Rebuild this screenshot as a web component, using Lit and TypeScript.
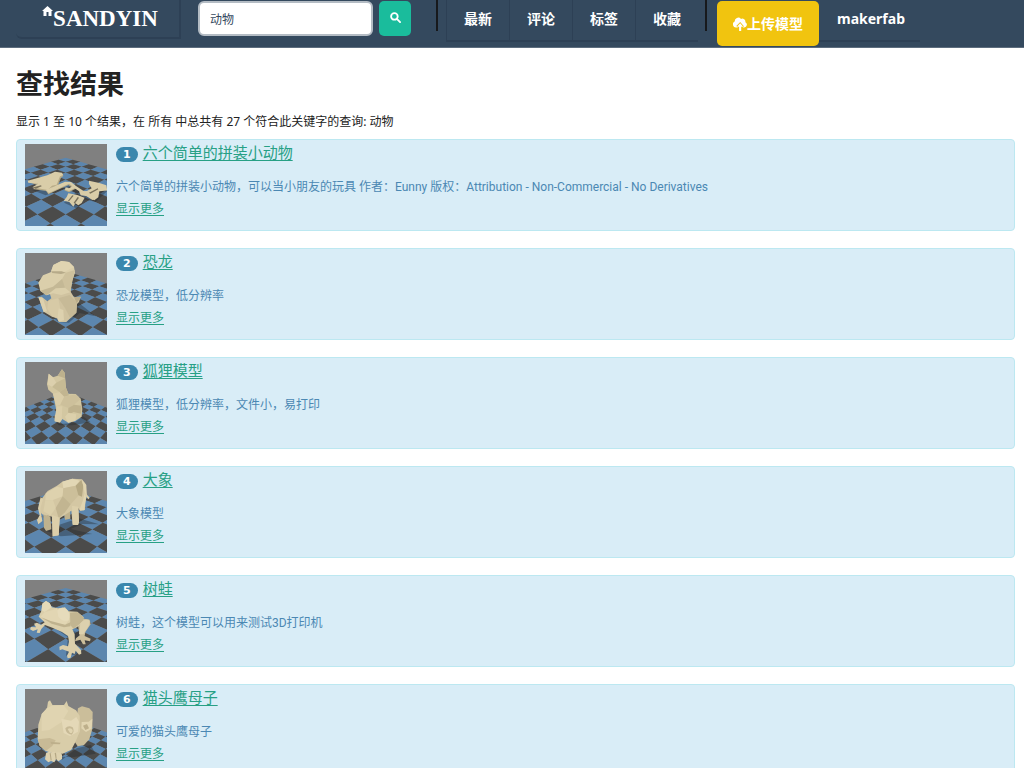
import { LitElement, html, css, svg } from "lit";
import { customElement, property } from "lit/decorators.js";

interface Board { x: number; y: number; h: number; slope: number; depth: number }
interface Facet { p: string; c: string }
interface Scene { top: number; board: Board; shadow: string; facets: Facet[] }
interface Model { title: string; text: string; scene: Scene }

// Facet colours are pulled towards the clay tone to keep the shading soft.
const clay = [212, 200, 166];
const soften = (c: string) =>
  `rgb(${clay.map((k, i) => Math.round(parseInt(c.slice(1 + i * 2, 3 + i * 2), 16) * 0.65 + k * 0.35)).join(",")})`;
const f = (c: string, p: string): Facet => ({ c: soften(c), p });

// Perspective chessboard seen corner-on: (u, v) tiles counted from the far corner.
function boardTiles(b: Board) {
  const at = (u: number, v: number) => {
    const d = b.depth - u - v;
    const x = b.x + ((b.h / b.slope) * (u - v)) / d;
    const y = b.y - b.h + (b.h * b.depth) / d;
    return `${x.toFixed(1)},${y.toFixed(1)}`;
  };
  const tiles = [];
  const n = Math.floor(b.depth * 0.8);
  for (let u = 0; u < n; u++) {
    for (let v = 0; v < n; v++) {
      if (u + v + 2 >= b.depth * 0.82) continue;
      const dark = (u + v) % 2 === 1;
      tiles.push(svg`<polygon points="${at(u, v)} ${at(u + 1, v)} ${at(u + 1, v + 1)} ${at(u, v + 1)}" fill=${dark ? "#4b4b4a" : "#5c86ae"} />`);
    }
  }
  return tiles;
}

const pieces: Scene = {
  top: 12, board: { x: 150, y: 53, h: 158, slope: 0.287, depth: 27 },
  shadow: "M50 150L90 166L158 142L180 158L145 188L185 206L206 178L240 186L276 152L240 146L215 160L170 132L120 152Z",
  facets: [
    f("#a89b76", "M36 126L98 108L120 97L141 101L143 108L136 113L126 138L112 141L98 154L52 147L66 135Z"),
    f("#dccfa9", "M36 122L95 106L118 95L139 98L142 105L133 109L123 134L109 137L96 150L50 142L68 131L38 128Z"),
    f("#a89b76", "M91 152L150 128L164 127L184 144L160 157L146 151L150 146L160 149L170 143L158 135L98 163Z"),
    f("#dccfa9", "M90 150L148 125L166 126L180 137L239 176L230 180L177 145L160 153L148 149L150 142L160 145L170 139L160 131L100 159Z"),
    f("#dccfa9", "M220 122L251 129L272 136L275 151L251 154L248 172L236 181L216 169L195 166L190 154L214 153L228 145L220 132Z"),
    f("#dccfa9", "M158 160L185 165L207 173L198 189L188 196L179 190L173 200L161 186L144 182L153 171Z"),
    f("#4a4434", "M174 167L160 184L157 182L170 166ZM190 173L177 191L174 188L186 171ZM220 158L246 145L248 148L224 161ZM53 142L76 136L78 139L60 146Z"),
  ],
};

const dino: Scene = {
  top: 15, board: { x: 150, y: 70, h: 156, slope: 0.295, depth: 27 },
  shadow: "M90 188L128 222L160 224L192 195L240 205L190 165Z",
  facets: [
    f("#cec19c", "M100 130L164 130L175 148L195 146L190 162L184 168L182 194L164 211L152 222L130 222L127 212L109 206L84 191L69 148L78 146L95 160L107 151Z"),
    f("#dfd3ae", "M68 104L82 82L105 73L113 51L137 39L160 42L175 57L178 74L170 98L164 133L137 141L112 136L93 142L74 129Z"),
    f("#e6dab7", "M106 72L113 51L137 39L160 42L175 57L150 70L128 76Z"),
    f("#a69a79", "M106 70L138 70L151 74L136 78L110 75Z"),
    f("#cbbd98", "M150 74L178 66L170 98L164 133L148 119L134 102Z"),
    f("#bcaf8c", "M74 128L112 116L139 93L148 119L120 121L99 137L91 142Z"),
    f("#d8cba6", "M98 158L128 151L134 183L127 211L109 205L95 183Z"),
    f("#c0b28f", "M128 151L162 141L184 164L182 194L164 211L148 180Z"),
    f("#e2d6b2", "M129 181L143 186L145 217L129 221L125 213ZM68 147L82 151L94 190L84 192Z"),
    f("#aa9d7b", "M175 147L197 146L183 166Z"),
  ],
};

const fox: Scene = {
  top: 17, board: { x: 150, y: 107, h: 128, slope: 0.38, depth: 27 },
  shadow: "M116 195L134 203L174 200L202 180L225 198L170 207L130 207Z",
  facets: [
    f("#d3c69f", "M94 84L99 52L112 63L126 58L139 39L147 49L151 94L158 112L180 113L195 127L200 158L198 181L178 194L158 199L140 188L133 199L117 195L117 178L124 172L112 112L98 100Z"),
    f("#e1d5b0", "M99 52L112 63L122 79L109 91L96 84Z"),
    f("#b1a47f", "M126 58L139 39L147 49L148 66Z"),
    f("#bfb28b", "M122 79L148 66L151 94L132 107L110 92Z"),
    f("#ddd0a9", "M112 112L132 107L146 121L134 145L122 149Z"),
    f("#b8aa84", "M132 107L151 94L160 117L146 121Z"),
    f("#c9bc95", "M146 121L180 114L195 128L175 145L158 155L134 145Z"),
    f("#ded1aa", "M124 150L140 150L138 190L132 198L117 195L118 178Z"),
    f("#b4a680", "M158 155L175 145L198 148L196 172L174 167L157 176Z"),
    f("#e0d4ae", "M148 181L158 169L182 174L179 193L157 199Z"),
  ],
};

const elephant: Scene = {
  top: 18, board: { x: 150, y: 70, h: 161, slope: 0.31, depth: 23 },
  shadow: "M84 195L135 214L230 207L165 192L200 177L250 178L189 160Z",
  facets: [
    f("#b3a681", "M143 130L163 127L164 161L148 164ZM83 145L104 155L107 193L91 198L85 188Z"),
    f("#d4c7a2", "M70 134L73 108L96 78L124 62L140 50L170 41L199 43L210 57L213 89L209 113L208 135L194 138L188 129L190 171L187 180L171 180L167 137L132 160L129 211L111 214L109 155L79 148Z"),
    f("#e3d7b3", "M90 85L124 65L143 70L141 94L112 105L89 106Z"),
    f("#eadfbd", "M140 50L170 41L192 47L180 62L143 70Z"),
    f("#c8ba94", "M143 70L180 62L188 92L165 118L141 94Z"),
    f("#dfd2ac", "M89 106L112 105L120 129L105 151L83 139Z"),
    f("#b9ab85", "M141 94L165 118L148 142L129 160L120 129Z"),
    f("#e0d3ac", "M109 150L132 158L129 211L111 214ZM169 122L188 125L190 171L187 180L171 178Z"),
    f("#a5976f", "M180 62L197 45L203 62L199 95L188 91Z"),
    f("#e6dab5", "M199 45L212 60L213 89L205 136L191 135L202 106L207 84Z"),
    f("#ded1ab", "M209 83L222 98L218 103L208 91ZM75 96L67 130L72 151L64 165L68 178L80 168L77 150L74 131L82 103Z"),
  ],
};

const frog: Scene = {
  top: 18, board: { x: 150, y: 42, h: 127, slope: 0.27, depth: 22 },
  shadow: "M78 150L113 160L157 190L151 245L196 240L177 209L222 204L202 178Z",
  facets: [
    f("#c7b994", "M185 145L205 134L222 137L225 151L209 174L207 186L225 194L223 202L207 199L210 211L202 211L194 197L178 202L181 193L192 184L190 170Z"),
    f("#ded2ad", "M69 128L77 111L80 89L91 81L102 88L108 100L128 103L148 100L158 112L185 113L204 130L202 143L184 160L170 166L177 181L178 209L196 228L197 239L190 242L180 230L177 240L169 236L165 251L156 253L154 245L160 233L140 226L132 229L131 218L142 213L157 217L160 203L157 186L139 174L110 161L88 153L77 165L72 177L63 176L66 166L52 171L43 166L46 159L61 160L55 149L64 146L76 153L87 145Z"),
    f("#eee3c2", "M80 89L91 81L102 88L108 100L87 114L78 109Z"),
    f("#e9ddba", "M87 114L124 105L133 125L161 136L149 153L111 145L74 130Z"),
    f("#b4a681", "M76 130L105 141L148 152L166 144L164 157L145 160L108 149Z"),
    f("#efe5c6", "M125 109Q139 95 154 107Q166 119 159 139Q142 145 128 128Z"),
    f("#b8aa85", "M163 116L185 114L204 130L201 143L173 164L164 153Z"),
    f("#e2d6b3", "M194 148Q205 133 219 137Q227 145 213 166L203 181L190 181Z"),
  ],
};

const owl: Scene = {
  top: 30, board: { x: 150, y: 117, h: 123, slope: 0.35, depth: 25.6 },
  shadow: "M90 231L140 242L183 208L225 198L240 224L170 235Z",
  facets: [
    f("#c6b993", "M187 88L199 82L221 88L231 99L230 150L221 181L205 198L186 202L174 184Z"),
    f("#dcd0ab", "M66 181L68 137L78 105L94 88L97 68L103 64L111 79L145 78L153 66L158 81L181 94L192 110L193 157L178 191L167 212L141 224L115 224L91 216L72 200Z"),
    f("#e6dab7", "M78 105L94 88L111 79L144 79L158 96L137 130L101 153L78 156Z"),
    f("#c1b38e", "M67 181L102 177L120 184L110 201L90 216L72 200Z"),
    f("#ece1c0", "M137 119L166 125L182 114L190 128L187 158L163 171L144 162Z"),
    f("#bfb18c", "M149 148Q158 138 171 145Q178 158 168 167Q151 166 149 148Z"),
    f("#e8dcb8", "M156 150Q166 145 171 153Q172 164 163 162Z"),
    f("#e8dcb8", "M198 129L219 128L230 119L228 149L211 159L197 148Z"),
    f("#b0a27d", "M202 140L214 135L220 148L209 153ZM104 188L135 191L132 196L107 195Z"),
    f("#e4d8b4", "M91 223Q101 215 106 221Q115 216 122 221Q135 216 139 227L139 240L128 247L121 240L116 250L106 246L98 250L88 241Z"),
    f("#a39571", "M105 222L108 244L105 245L102 223ZM121 221L123 239L120 240L117 222Z"),
  ],
};

const models: Model[] = [
  { title: "六个简单的拼装小动物", text: "六个简单的拼装小动物，可以当小朋友的玩具 作者：Eunny 版权：Attribution - Non-Commercial - No Derivatives", scene: pieces },
  { title: "恐龙", text: "恐龙模型，低分辨率", scene: dino },
  { title: "狐狸模型", text: "狐狸模型，低分辨率，文件小，易打印", scene: fox },
  { title: "大象", text: "大象模型", scene: elephant },
  { title: "树蛙", text: "树蛙，这个模型可以用来测试3D打印机", scene: frog },
  { title: "猫头鹰母子", text: "可爱的猫头鹰母子", scene: owl },
];

@customElement("model-thumb")
export class ModelThumb extends LitElement {
  @property({ attribute: false }) scene!: Scene;
  static styles = css`
    :host { display: block; width: 82px; height: 82px; flex: none; }
    .pic { display: block; width: 100%; height: 100%; background: #808080; }
  `;
  render() {
    const s = this.scene;
    return html`<svg class="pic" viewBox="28 ${s.top} 246 246" aria-hidden="true">
      ${boardTiles(s.board)}
      <path d=${s.shadow} fill="#252a30" opacity="0.4" />
      ${s.facets.map((x) => svg`<path d=${x.p} fill=${x.c} />`)}
    </svg>`;
  }
}

@customElement("result-card")
export class ResultCard extends LitElement {
  @property({ type: Number }) index = 1;
  @property({ attribute: false }) model!: Model;
  static styles = css`
    :host {
      display: flex; gap: 9px; padding: 4px 8px; box-sizing: border-box;
      background: #d9edf7; border: 1px solid #bce8f1; border-radius: 4px; color: #4b88b3;
    }
    .body { min-width: 0; font: 12px/22px "Roboto", "Noto Sans CJK SC", sans-serif; }
    .head { display: flex; align-items: flex-start; gap: 5px; margin: 0 0 15px; font-size: 15px; line-height: 18px; font-weight: 400; }
    .badge {
      padding: 0 7px; margin-top: 3px; border-radius: 8px; background: #3a87ad; color: #fff;
      font: bold 11px/15px "DejaVu Sans", sans-serif;
    }
    a { color: #27a085; text-decoration: underline; text-underline-offset: 2px; }
    .text { margin: 0; line-height: 21px; }
  `;
  render() {
    return html`
      <model-thumb .scene=${this.model.scene}></model-thumb>
      <div class="body">
        <h2 class="head"><span class="badge">${this.index}</span><a href="#">${this.model.title}</a></h2>
        <p class="text">${this.model.text}</p>
        <a href="#">显示更多</a>
      </div>`;
  }
}

@customElement("app-root")
export class AppRoot extends LitElement {
  static styles = css`
    :host { display: block; height: 100vh; overflow: hidden; background: #fff; color: #222; font: 12px/20px "Noto Sans", "Noto Sans CJK SC", sans-serif; }
    .bar { display: flex; align-items: flex-start; height: 47px; padding-left: 16px; background: #34495e; border-bottom: 1px solid #5d6d7e; }
    .bar a { color: #fff; text-decoration: none; }
    .logo {
      display: flex; justify-content: center; box-sizing: border-box; width: 165px; height: 39px; padding: 5px 0 0 5px;
      border: solid #2d4055; border-width: 0 2px 2px 0; border-radius: 0 0 0 6px;
      font: bold 23px/27px "Liberation Serif", serif;
    }
    .home { width: 11px; height: 11px; margin-top: 1px; }
    .search { display: flex; gap: 6px; margin: 1px 25px 0 17px; }
    .field {
      box-sizing: border-box; width: 175px; height: 35px; padding: 0 10px; border: 2px solid #b4bcc4; border-radius: 6px;
      background: #fff; color: #34495e; font: inherit; outline: none;
    }
    .go { display: grid; place-items: center; width: 32px; height: 35px; padding: 0 0 3px; border: 0; border-radius: 5px; background: #1abc9c; }
    .go svg { width: 11px; height: 11px; }
    .rule { width: 2px; height: 31px; background: #17191c; }
    .menu { display: flex; margin: 0 7px 0 8px; }
    .item {
      box-sizing: border-box; width: 63px; height: 42px; border: solid #2d4055; border-width: 0 0 2px 1px;
      font-size: 14px; line-height: 38px; font-weight: 700; text-align: center;
    }
    .upload {
      display: flex; align-items: center; justify-content: center; width: 102px; height: 45px; margin: 1px 0 0 10px; padding: 0;
      border: 0; border-radius: 5px; background: #f1c40f; color: #fff; font: inherit; font-size: 14px; font-weight: 700;
    }
    .upload svg { width: 14px; height: 14px; }
    .user { box-sizing: border-box; height: 42px; padding: 0 15px 0 18px; border-bottom: 2px solid #2d4055; font-size: 14px; line-height: 38px; font-weight: 700; }
    .main { padding: 16px 9px 0 16px; }
    .title { margin: 0; font-size: 27px; line-height: 40px; font-weight: 700; }
    .count { margin: 8px 0 7px; }
    .list { display: grid; gap: 17px; }
  `;
  render() {
    return html`
      <header class="bar">
        <a class="logo" href="#" aria-label="SANDYIN">
          <svg class="home" viewBox="0 0 11 11" fill="#fff"><path d="M5.5 0L11 5H9.5V10H6.5V6H4.5V10H1.5V5H0Z" /></svg>SANDYIN
        </a>
        <form class="search" @submit=${(e: Event) => e.preventDefault()}>
          <input class="field" type="text" aria-label="搜索" value="动物" />
          <button class="go" aria-label="搜索">
            <svg viewBox="0 0 12 12" fill="none" stroke="#fff" stroke-width="2"><circle cx="4.8" cy="4.8" r="3.6" /><path d="M7.5 7.5L11 11" stroke-linecap="round" /></svg>
          </button>
        </form>
        <span class="rule"></span>
        <nav class="menu">${["最新", "评论", "标签", "收藏"].map((t) => html`<a class="item" href="#">${t}</a>`)}</nav>
        <span class="rule"></span>
        <button class="upload">
          <svg viewBox="0 0 14 14" fill="#fff"><path d="M5 10.5H3.2A3.1 3.1 0 0 1 1.7 4.6A3.6 3.6 0 0 1 8 1.9A3.2 3.2 0 0 1 12.4 5.3A2.7 2.7 0 0 1 11.2 10.4H9.6L10.9 9.2L7.2 4.9L3.3 9.1Z" /><path d="M7.2 6.2L10.2 9.7H8.2V14H6.1V9.7H4Z" /></svg>上传模型
        </button>
        <a class="user" href="#">makerfab</a>
      </header>
      <main class="main">
        <h1 class="title">查找结果</h1>
        <p class="count">显示 1 至 10 个结果，在 所有 中总共有 27 个符合此关键字的查询: 动物</p>
        <div class="list">${models.map((m, i) => html`<result-card .index=${i + 1} .model=${m}></result-card>`)}</div>
      </main>`;
  }
}
